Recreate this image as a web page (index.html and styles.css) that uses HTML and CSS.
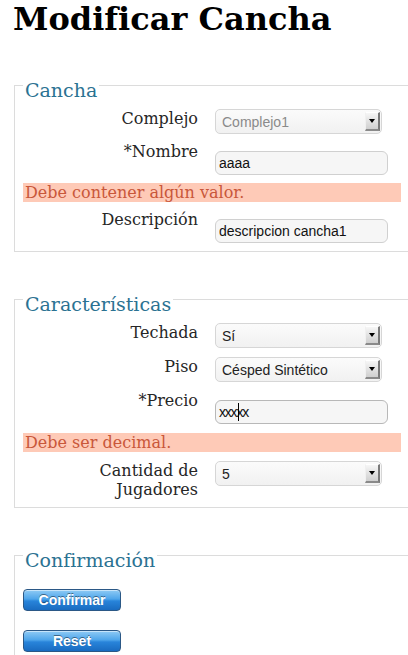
FILE: index.html
```html
<!DOCTYPE html>
<html lang="es">
<head>
<meta charset="utf-8">
<title>Modificar Cancha</title>
<link rel="stylesheet" href="styles.css">
</head>
<body>
<h1 class="title">Modificar Cancha</h1>

<fieldset class="group">
  <legend class="group-legend">Cancha</legend>
  <div class="fields">
    <div class="row">
      <label class="row-label">Complejo</label>
      <div class="select select-disabled"><span class="select-text">Complejo1</span><span class="select-btn"><span class="tri"></span></span></div>
    </div>
    <div class="row">
      <label class="row-label">*Nombre</label>
      <div class="input">aaaa</div>
    </div>
    <div class="error">Debe contener algún valor.</div>
    <div class="row">
      <label class="row-label">Descripción</label>
      <div class="input">descripcion cancha1</div>
    </div>
  </div>
</fieldset>

<fieldset class="group">
  <legend class="group-legend">Características</legend>
  <div class="fields fields-loose">
    <div class="row">
      <label class="row-label">Techada</label>
      <div class="select"><span class="select-text">Sí</span><span class="select-btn"><span class="tri"></span></span></div>
    </div>
    <div class="row">
      <label class="row-label">Piso</label>
      <div class="select"><span class="select-text">Césped Sintético</span><span class="select-btn"><span class="tri"></span></span></div>
    </div>
    <div class="row">
      <label class="row-label">*Precio</label>
      <div class="input input-focus"><span class="xs">xxxxx</span><span class="caret"></span></div>
    </div>
    <div class="error">Debe ser decimal.</div>
    <div class="row">
      <label class="row-label">Cantidad de Jugadores</label>
      <div class="select"><span class="select-text">5</span><span class="select-btn"><span class="tri"></span></span></div>
    </div>
  </div>
</fieldset>

<fieldset class="group">
  <legend class="group-legend">Confirmación</legend>
  <div class="buttons">
    <button class="btn" type="button">Confirmar</button>
    <button class="btn" type="button">Reset</button>
  </div>
</fieldset>
</body>
</html>
```

FILE: styles.css
```css
html {
  overflow: hidden;
  background: #fff;
}
body {
  margin: 0;
  font-family: "DejaVu Serif", serif;
  color: #222;
}
.title {
  margin: 0;
  padding-left: 13px;
  font-family: "DejaVu Serif", serif;
  font-weight: bold;
  font-size: 32px;
  line-height: normal;
  color: #000;
}
.group {
  box-sizing: border-box;
  width: 396px;
  margin: 31px 0 0 14px;
  padding: 8px 8px 8px 8px;
  border: 1px solid #dcdcdc;
  min-inline-size: 0;
}
.group + .group {
  margin-top: 31px;
}
.group-legend {
  padding: 10px 2px 0;
  font-family: "DejaVu Serif", serif;
  font-size: 19px;
  color: #2b7292;
}
.fields {
  display: flex;
  flex-direction: column;
  gap: 8px;
}
.fields-loose {
  gap: 9px;
}
.row {
  display: flex;
  align-items: flex-start;
  gap: 17px;
}
.row-label {
  width: 175px;
  flex: none;
  text-align: right;
  font-size: 16px;
  color: #262626;
}
.select {
  box-sizing: border-box;
  width: 167px;
  height: 25px;
  display: flex;
  align-items: center;
  justify-content: space-between;
  border: 1px solid #d6d6d6;
  border-radius: 5px;
  background: linear-gradient(#fbfbfb, #f1f1f1);
  padding-left: 6px;
  font-family: "Liberation Sans", Arial, sans-serif;
  font-size: 14px;
  color: #222;
}
.select-disabled {
  color: #8a8a8a;
}
.select-btn {
  box-sizing: border-box;
  width: 15px;
  height: 19px;
  margin-right: 1px;
  display: flex;
  align-items: center;
  justify-content: center;
  background: linear-gradient(#f6f6f6, #cfcfcf);
  border-right: 2px solid #7a7a7a;
  border-bottom: 2px solid #8a8a8a;
  border-top: 1px solid #fff;
  border-left: 1px solid #f0f0f0;
}
.tri {
  width: 0;
  height: 0;
  border-left: 3px solid transparent;
  border-right: 3px solid transparent;
  border-top: 4px solid #000;
}
.input {
  position: relative;
  box-sizing: border-box;
  width: 173px;
  height: 24px;
  margin-top: 9px;
  display: flex;
  align-items: center;
  padding-left: 3px;
  border: 1px solid #d0d0d0;
  border-radius: 6px;
  background: #f6f6f6;
  font-family: "Liberation Sans", Arial, sans-serif;
  font-size: 14px;
  color: #111;
}
.input-focus {
  border-color: #b8b8b8;
}
.xs {
  letter-spacing: -1.2px;
}
.caret {
  position: absolute;
  left: 22px;
  top: 2px;
  width: 1px;
  height: 18px;
  background: #000;
}
.error {
  padding-left: 2px;
  background: #fecab7;
  color: #c9573a;
  font-size: 16px;
  line-height: 19px;
}
.buttons {
  display: flex;
  flex-direction: column;
  align-items: flex-start;
  gap: 19px;
  padding-top: 10px;
  padding-bottom: 20px;
}
.btn {
  box-sizing: border-box;
  width: 98px;
  height: 22px;
  padding: 0;
  margin: 0;
  border: 1px solid #2b5886;
  border-radius: 4px;
  background: linear-gradient(#8fcbf5 0%, #4ea5ea 45%, #2884da 55%, #196bc0 100%);
  box-shadow: inset 0 1px 0 rgba(255,255,255,0.5);
  font-family: "Liberation Sans", Arial, sans-serif;
  font-weight: bold;
  font-size: 14px;
  color: #fff;
  text-shadow: 0 -1px 0 rgba(0,0,0,0.45);
}
```
